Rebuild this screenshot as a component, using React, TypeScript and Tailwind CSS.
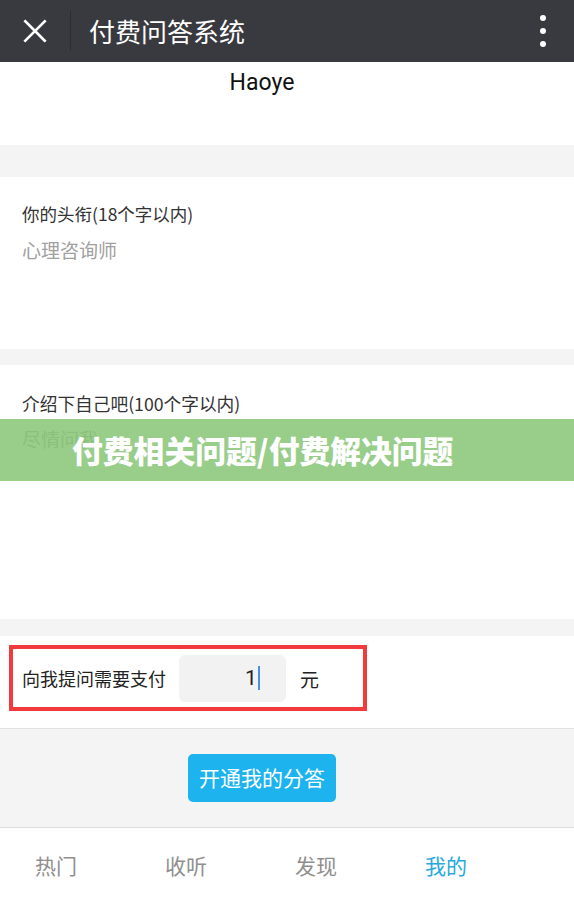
const font = "font-['Noto_Sans_CJK_SC','Noto_Sans',sans-serif]";

function CloseIcon() {
  return (
    <svg viewBox="0 0 24 24" className="h-[26px] w-[26px]" fill="none" aria-hidden>
      <path d="M3 3L21 21M21 3L3 21" stroke="#ffffff" strokeWidth="2.4" strokeLinecap="square" />
    </svg>
  );
}

export default function App() {
  const tabs = ["热门", "收听", "发现", "我的"];

  return (
    <div className={`relative flex h-[901px] w-[574px] flex-col overflow-hidden bg-[#f4f4f4] ${font}`}>
      {/* top bar */}
      <header className="flex h-[62px] shrink-0 items-center bg-[#393a3f]">
        <div className="flex w-[70px] justify-center">
          <CloseIcon />
        </div>
        <div className="h-[40px] w-px bg-[#2c2d31]" />
        <h1 className="ml-[18px] text-[26px] leading-none text-white">付费问答系统</h1>
        <div className="ml-auto mr-[28px] flex flex-col items-center gap-[7px]">
          <span className="h-[6px] w-[6px] rounded-full bg-white" />
          <span className="h-[6px] w-[6px] rounded-full bg-white" />
          <span className="h-[6px] w-[6px] rounded-full bg-white" />
        </div>
      </header>

      <section className="flex h-[83px] shrink-0 justify-center bg-white pr-[50px] pt-[6px]">
        <p className="font-['Roboto',sans-serif] text-[23px] leading-[30px] text-[#111]">Haoye</p>
      </section>

      <div className="h-[32px] shrink-0" />

      <section className="h-[172px] shrink-0 bg-white px-[22px] pt-[24px]">
        <p className="text-[17.5px] leading-[26px] text-[#333]">你的头衔(18个字以内)</p>
        <p className="mt-[10px] text-[19px] leading-[26px] text-[#a0a0a0]">心理咨询师</p>
      </section>

      <div className="h-[16px] shrink-0" />

      <section className="relative h-[254px] shrink-0 bg-white px-[22px] pt-[25px]">
        <p className="text-[17.7px] leading-[26px] text-[#333]">介绍下自己吧(100个字以内)</p>
        <p className="mt-[10px] text-[19px] leading-[26px] text-[#a0a0a0]">尽情问我</p>
        {/* watermark banner laid over the form */}
        <div className="absolute left-0 right-0 top-[54px] flex h-[62px] items-center bg-[#86c475]/85 pl-[72px]">
          <span className="text-[30.8px] font-black leading-none text-white">付费相关问题/付费解决问题</span>
        </div>
      </section>

      <div className="h-[17px] shrink-0" />

      <section className="h-[93px] shrink-0 border-b border-[#e2e2e2] bg-white pl-[9px] pt-[9px]">
        <div className="flex h-[66px] w-[358px] items-center border-[4px] border-[#f23a3c] pl-[9px]">
          <span className="text-[18px] leading-none text-[#222]">向我提问需要支付</span>
          <div className="ml-[13px] flex h-[47px] w-[107px] items-center justify-center rounded-[6px] bg-[#f2f2f2] pl-[40px]">
            <span className="font-['Roboto',sans-serif] text-[21px] leading-none text-[#222]">1</span>
            <span className="ml-px h-[24px] w-[2px] bg-[#4a90e2]" />
          </div>
          <span className="ml-[14px] text-[19px] leading-none text-[#222]">元</span>
        </div>
      </section>

      <section className="flex flex-1 items-start pl-[188px] pt-[25px]">
        <button
          type="button"
          className="flex h-[48px] w-[148px] items-center justify-center rounded-[5px] bg-[#1cb3ef] text-[21px] text-white"
        >
          开通我的分答
        </button>
      </section>

      <nav className="flex h-[74px] shrink-0 items-center gap-[88px] border-t border-[#dedede] bg-white pl-[35px] pt-[2px]">
        {tabs.map((tab, index) => (
          <span
            key={tab}
            className={`text-[21px] leading-none ${index === 3 ? "text-[#27a9e1]" : "text-[#8f8f8f]"}`}
          >
            {tab}
          </span>
        ))}
      </nav>
    </div>
  );
}
